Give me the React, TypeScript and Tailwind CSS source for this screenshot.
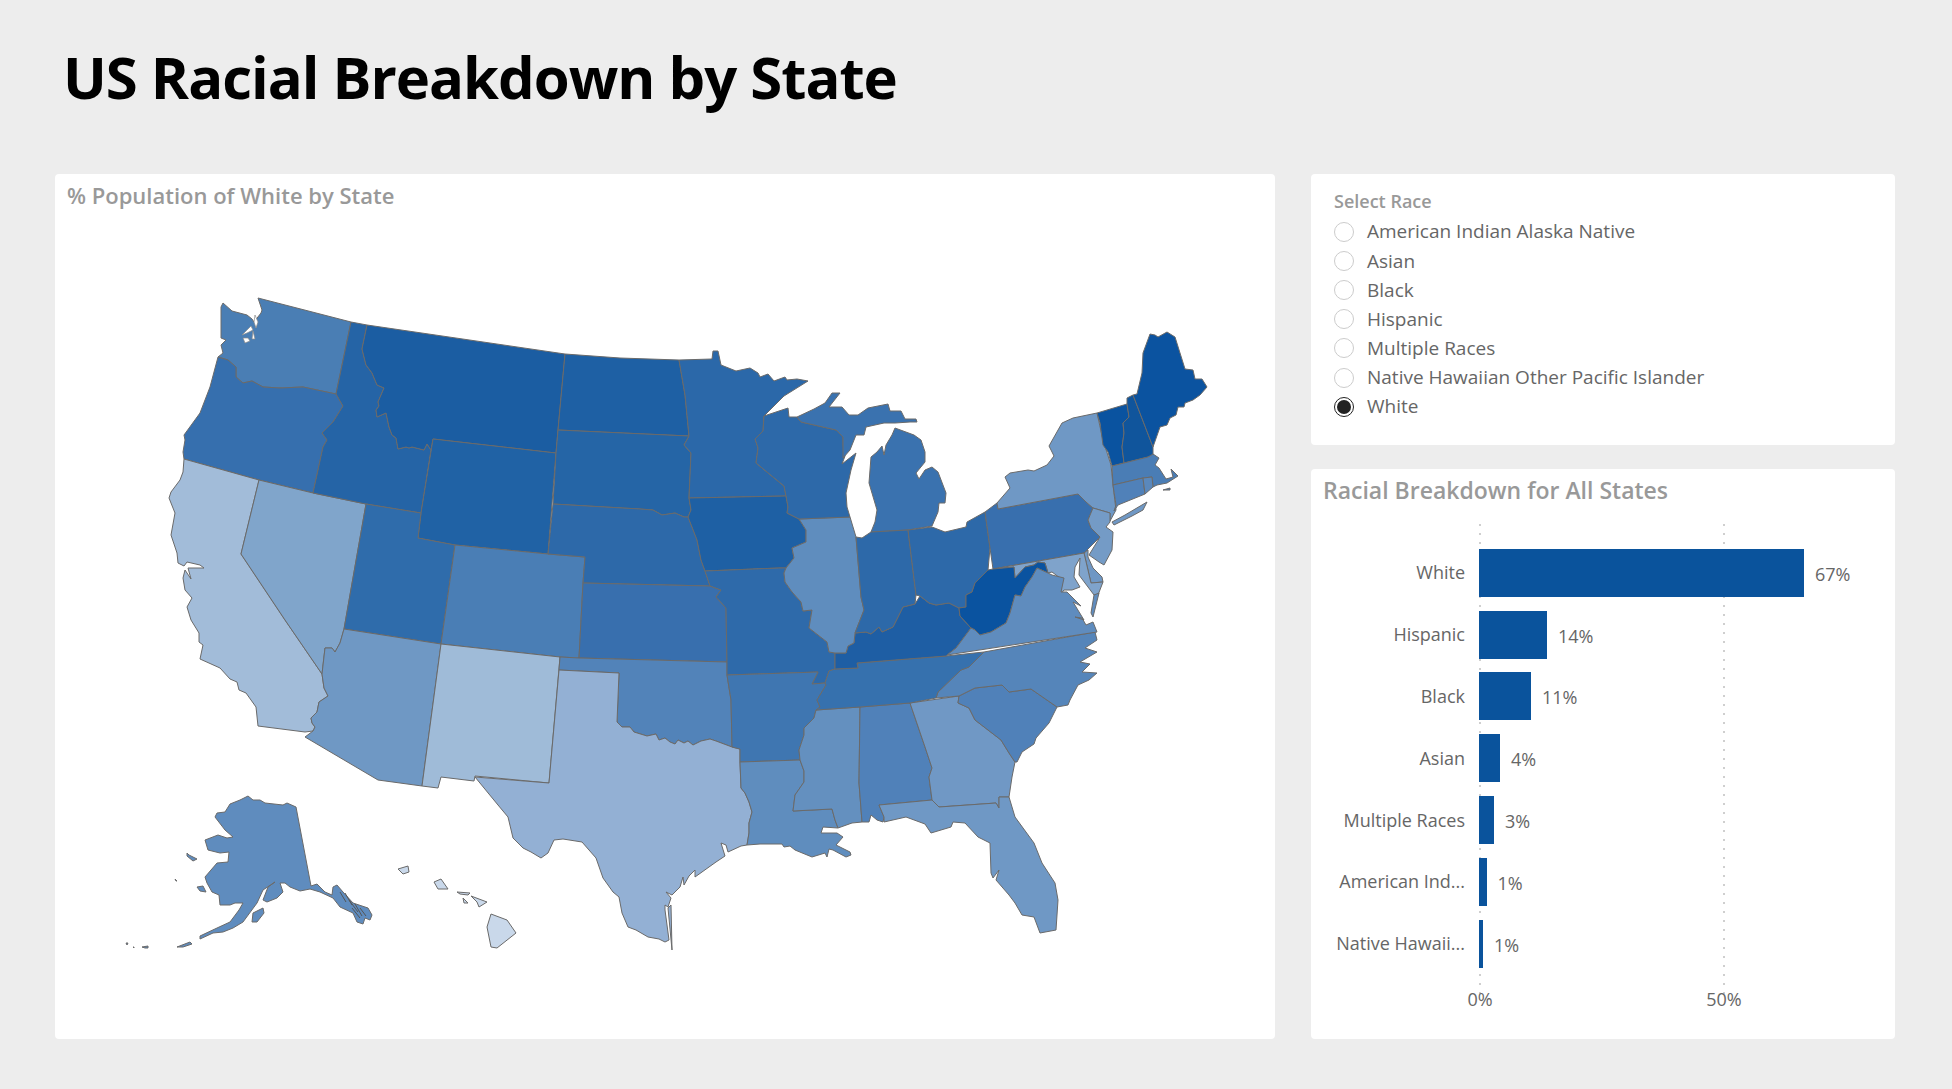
const FONT = "font-['Open_Sans','Noto_Sans',sans-serif]";

// map shapes, coordinates are page pixels
const states: { n: string; f: string; p: string }[] = [
  { n: "WA", f: "#4a7eb4", p: "258,298 351,322 336,394 303,387 280,388 263,387 252,381 243,383 236,377 236,367 228,360 218,357 223,353 221,345 226,340 221,338 221,307 223,303 232,311 247,315 252,319 254,322 261,313 262,310" },
  { n: "OR", f: "#366fae", p: "218,357 228,360 236,367 236,377 243,383 252,381 263,387 280,388 303,387 336,394 343,406 333,422 322,433 327,440 323,447 313,493 259,480 184,459 183,452 185,440 184,435 200,413 210,387" },
  { n: "CA", f: "#a2bcd9", p: "184,459 259,480 241,554 285,620 322,674 324,688 328,696 319,702 317,712 311,718 312,723 315,727 313,731 305,732 258,726 256,707 246,693 239,690 237,682 230,679 220,668 200,659 203,645 199,642 199,633 191,620 187,607 192,598 185,590 183,578 185,570 191,579 188,568 204,568 200,565 187,562 184,566 178,563 177,553 171,535 175,513 169,498 171,492 180,480 183,472" },
  { n: "NV", f: "#80a5cb", p: "259,480 313,493 366,504 344,629 340,643 335,652 332,648 325,648 322,674 285,620 241,554" },
  { n: "ID", f: "#2564a6", p: "351,322 367,325 362,349 366,365 372,373 377,385 384,388 378,402 379,406 376,410 377,417 386,413 389,427 392,435 396,438 398,449 406,447 409,448 412,447 424,450 427,444 431,450 421,513 366,504 313,493 323,447 327,440 322,433 333,422 343,406 336,394" },
  { n: "MT", f: "#1b5da2", p: "367,325 565,354 558,430 556,453 433,439 431,450 427,444 424,450 412,447 409,448 406,447 398,449 396,438 392,435 389,427 386,413 377,417 376,410 379,406 378,402 384,388 377,385 372,373 366,365 362,349" },
  { n: "WY", f: "#2062a5", p: "433,439 556,453 548,554 455,545 418,538 421,513" },
  { n: "UT", f: "#2f6cab", p: "366,504 421,513 418,538 455,545 441,644 344,629" },
  { n: "CO", f: "#4a7eb5", p: "455,545 548,554 585,557 583,583 579,658 560,657 441,644" },
  { n: "AZ", f: "#6f98c4", p: "344,629 441,644 422,786 378,780 305,737 313,731 315,727 312,723 311,718 317,712 319,702 328,696 324,688 322,674 325,648 332,648 335,652 340,643" },
  { n: "NM", f: "#9fbbd8", p: "441,644 560,657 549,783 475,776 474,781 441,777 438,788 422,786" },
  { n: "ND", f: "#1e60a4", p: "565,354 620,358 679,360 685,395 689,436 558,430" },
  { n: "SD", f: "#2565a6", p: "558,430 689,436 684,445 691,453 689,498 691,510 688,517 684,517 675,513 662,515 653,510 640,509 553,504 556,453" },
  { n: "NE", f: "#2d69a9", p: "553,504 640,509 653,510 662,515 675,513 684,517 688,517 692,527 697,540 701,560 705,571 710,586 583,583 585,557 548,554" },
  { n: "KS", f: "#386fae", p: "583,583 710,586 721,590 716,597 726,608 727,662 579,658" },
  { n: "OK", f: "#5283b9", p: "560,657 579,658 727,662 727,675 731,700 732,747 716,741 710,739 701,741 693,745 688,741 684,743 678,740 675,744 670,742 665,738 659,740 656,734 647,736 634,732 630,727 622,727 617,722 619,673 559,670" },
  { n: "TX", f: "#93b0d4", p: "559,670 619,673 617,722 622,727 630,727 634,732 647,736 656,734 659,740 665,738 670,742 675,744 678,740 684,743 688,741 693,745 701,741 710,739 716,741 732,747 740,749 740,762 741,788 745,793 749,802 752,812 749,823 749,833 747,845 741,846 728,852 726,845 721,843 725,856 716,862 695,877 695,870 689,876 684,885 683,877 680,887 672,895 666,892 671,898 668,907 665,905 665,910 669,940 665,942 659,939 648,937 636,930 628,927 622,913 619,897 613,892 603,878 596,858 582,842 563,839 554,840 548,853 541,858 531,852 523,848 513,838 508,817 498,805 475,777 549,783" },
  { n: "TXi", f: "#93b0d4", p: "668,908 671,905 672,950" },
  { n: "MN", f: "#2b68a9", p: "679,360 712,359 713,351 718,351 721,365 736,371 750,368 758,373 760,377 768,374 774,381 785,377 787,380 797,379 808,381 784,396 764,416 763,431 755,439 758,448 756,463 773,477 784,486 786,496 689,498 691,453 684,445 689,436 685,395" },
  { n: "IA", f: "#1e60a4", p: "689,498 786,496 788,507 787,513 799,519 806,530 806,542 792,548 794,558 786,568 779,568 705,571 701,560 697,540 692,527 688,517 691,510" },
  { n: "MO", f: "#2e6aaa", p: "705,571 779,568 786,568 784,573 785,582 792,592 801,602 803,611 812,610 809,628 827,642 829,652 835,653 835,669 829,671 825,683 812,684 818,672 727,675 727,662 726,608 716,597 721,590 710,586" },
  { n: "AR", f: "#3f76b1", p: "727,675 818,672 812,684 825,683 826,685 820,695 817,700 820,707 816,710 814,718 804,728 804,735 799,750 800,760 740,762 740,749 732,747 731,700" },
  { n: "LA", f: "#5f8dbe", p: "740,762 800,760 804,771 804,782 795,795 793,811 832,809 835,820 838,828 823,827 821,833 837,833 843,837 836,845 850,852 851,855 846,857 833,850 829,849 827,857 825,853 812,857 795,850 790,846 784,847 782,844 760,844 747,845 749,833 749,823 752,812 749,802 745,793 741,788" },
  { n: "MS", f: "#6490bf", p: "816,710 860,707 859,783 862,822 852,823 838,828 835,820 832,809 793,811 795,795 804,782 804,771 800,760 799,750 804,735 804,728 814,718" },
  { n: "AL", f: "#5081b9", p: "860,707 910,703 925,747 932,768 929,777 932,800 879,805 884,817 883,822 877,820 871,815 869,822 862,822 859,783" },
  { n: "GA", f: "#7098c5", p: "910,703 959,696 958,703 969,708 975,720 1001,740 1009,753 1015,762 1012,777 1009,797 999,797 999,808 996,803 939,807 932,800 929,777 932,768 925,747" },
  { n: "FL", f: "#6f98c5", p: "879,805 932,800 939,807 996,803 999,808 999,797 1009,797 1015,817 1034,843 1042,863 1055,883 1058,900 1056,930 1040,933 1034,917 1022,915 1015,903 1009,895 996,880 999,870 993,878 991,873 990,843 978,837 965,823 953,822 951,827 931,833 925,824 906,817 884,822 884,817" },
  { n: "SC", f: "#5081b9", p: "959,696 975,688 1002,685 1009,692 1031,689 1057,707 1049,723 1036,738 1034,744 1022,752 1017,762 1015,762 1009,753 1001,740 975,720 969,708 958,703" },
  { n: "NC", f: "#5585ba", p: "984,652 1095,632 1097,640 1085,648 1097,652 1080,662 1090,664 1082,672 1097,673 1089,680 1078,685 1070,700 1068,705 1057,707 1031,689 1009,692 1002,685 975,688 959,696 936,698 938,692 961,670 969,667" },
  { n: "TN", f: "#3671ae", p: "835,669 858,668 857,663 946,656 984,652 969,667 961,670 938,692 936,698 910,703 860,707 816,710 820,707 817,700 820,695 826,685 825,683 829,671" },
  { n: "KY", f: "#1e5ea4", p: "835,653 846,653 848,646 854,643 855,633 866,632 871,634 879,627 882,632 893,627 899,615 903,607 915,604 920,596 929,603 936,605 949,603 959,608 960,616 971,628 956,648 946,656 857,663 858,668 835,669" },
  { n: "IL", f: "#5f8dbe", p: "799,519 850,517 856,537 861,597 864,610 855,633 854,643 848,646 846,653 835,653 829,652 827,642 809,628 812,610 803,611 801,602 792,592 785,582 784,573 786,568 794,558 792,548 806,542 806,530" },
  { n: "WI", f: "#2d69a9", p: "764,416 788,408 789,417 797,417 801,422 836,430 843,437 843,445 845,456 842,464 856,453 851,470 846,493 847,507 850,517 799,519 787,513 788,507 786,496 784,486 773,477 756,463 758,448 755,439 763,431" },
  { n: "MIu", f: "#3a72af", p: "797,417 814,409 825,403 832,393 840,393 829,407 842,407 849,415 858,415 868,408 888,404 890,411 901,411 905,419 916,419 917,422 910,422 895,423 884,423 866,427 864,435 856,435 850,450 843,458 843,445 843,437 836,430 801,422" },
  { n: "MI", f: "#3a72af", p: "892,435 895,428 914,435 921,440 925,452 925,462 916,473 919,479 925,470 932,467 938,472 946,493 945,503 939,503 938,512 932,526 908,530 871,532 875,522 877,510 869,483 871,457 877,452 882,446 884,455 886,445" },
  { n: "IN", f: "#2d69a9", p: "856,537 862,538 871,532 908,530 916,595 915,604 903,607 899,615 893,627 882,632 879,627 871,634 866,632 855,633 864,610 861,597" },
  { n: "OH", f: "#2d69a9", p: "908,530 932,527 945,532 966,527 967,522 985,512 990,548 988,570 975,583 972,592 966,595 966,607 959,608 949,603 936,605 929,603 920,596 916,595" },
  { n: "PA", f: "#386fae", p: "985,512 997,503 998,509 1078,494 1086,502 1093,508 1088,520 1091,528 1100,537 1084,553 993,569 990,548" },
  { n: "NY", f: "#6f98c5", p: "998,509 997,503 1010,488 1005,477 1010,473 1028,470 1034,471 1047,465 1054,456 1049,446 1062,423 1073,418 1097,413 1103,440 1111,465 1113,485 1116,510 1110,521 1110,513 1093,508 1086,502 1078,494" },
  { n: "LI", f: "#6f98c5", p: "1112,522 1125,515 1147,502 1143,510 1132,516 1114,525" },
  { n: "NJ", f: "#749bc6", p: "1093,508 1110,513 1110,522 1106,527 1113,532 1112,550 1104,565 1099,562 1089,555 1100,537 1091,528 1088,520" },
  { n: "DE", f: "#6f97c4", p: "1088,550 1088,557 1093,568 1102,577 1103,582 1091,583 1084,553" },
  { n: "MD", f: "#7fa3cb", p: "993,569 1084,553 1091,583 1103,582 1098,595 1094,595 1085,583 1079,575 1080,558 1075,567 1074,577 1080,587 1072,590 1064,590 1060,595 1062,583 1060,578 1052,572 1048,573 1045,563 1038,562 1034,565 1025,567 1015,578 1014,567" },
  { n: "WV", f: "#0a53a0", p: "993,569 1014,567 1015,578 1025,567 1034,565 1038,562 1045,563 1048,573 1037,568 1032,577 1025,587 1021,596 1015,595 1010,613 1006,623 991,632 980,635 975,630 971,628 960,616 959,608 966,607 966,595 972,592 975,583 988,570" },
  { n: "VA", f: "#5f8cbe", p: "947,655 1097,632 1093,622 1086,625 1082,618 1075,617 1084,620 1073,602 1081,606 1067,592 1061,592 1064,578 1052,575 1048,573 1037,568 1032,577 1025,587 1021,596 1015,595 1010,613 1006,623 991,632 980,635 975,630 971,628 956,648" },
  { n: "VAe", f: "#5f8cbe", p: "1099,593 1094,595 1091,613 1093,617" },
  { n: "VT", f: "#0a53a0", p: "1097,413 1127,404 1129,417 1123,423 1124,433 1122,447 1124,463 1112,466 1108,452 1103,445 1100,423" },
  { n: "NH", f: "#10559c", p: "1127,398 1133,395 1153,447 1153,455 1148,457 1124,463 1122,447 1124,433 1123,423 1129,417 1127,404" },
  { n: "ME", f: "#0b53a0", p: "1133,395 1137,394 1142,373 1143,353 1150,334 1155,335 1158,337 1167,332 1175,337 1185,369 1193,370 1195,379 1202,379 1207,387 1200,395 1193,400 1185,403 1184,407 1178,407 1176,415 1170,418 1167,425 1160,427 1153,447" },
  { n: "MA", f: "#4a7db5", p: "1112,466 1124,463 1148,457 1153,454 1159,458 1155,465 1159,468 1166,479 1173,477 1171,469 1178,476 1167,483 1157,485 1153,487 1152,477 1143,478 1113,485" },
  { n: "CT", f: "#5081b9", p: "1113,485 1143,478 1145,494 1118,505 1114,511 1116,505" },
  { n: "RI", f: "#5a88bc", p: "1143,478 1152,477 1153,487 1145,494" },
  { n: "MAi", f: "#4a7db5", p: "1163,490 1170,488 1170,490" },
  { n: "AK", f: "#5f8cbe", p: "248,796 253,800 260,800 265,803 283,805 287,803 296,807 311,886 317,884 325,892 332,895 333,887 337,885 343,892 353,903 368,908 372,915 370,920 365,918 363,924 357,922 353,913 340,907 333,898 320,892 310,889 300,891 290,887 285,883 280,883 283,892 277,898 267,902 263,900 268,887 275,882 263,890 257,903 243,922 233,928 223,932 213,933 200,939 200,936 217,928 230,922 239,910 243,903 235,903 230,905 220,905 219,895 212,892 207,883 205,877 217,863 228,862 229,852 220,853 208,850 205,840 218,835 227,838 233,837 225,830 215,817 217,813 225,812 230,804 240,800" },
  { n: "AKk", f: "#5f8cbe", p: "252,922 253,913 263,908 264,913 257,922" },
  { n: "AKn", f: "#5f8cbe", p: "197,887 203,886 206,892 200,891" },
  { n: "AKs", f: "#5f8cbe", p: "187,853 189,855 197,859 193,861 187,856" },
  { n: "AKa", f: "#5f8cbe", p: "177,947 190,942 192,944 183,947" },
  { n: "AKb", f: "#5f8cbe", p: "142,947 148,946 148,948 145,948" },
  { n: "AKc", f: "#5f8cbe", p: "126,943 128,943 127,945" },
  { n: "AKd", f: "#5f8cbe", p: "133,947 134,947 134,948" },
  { n: "AKe", f: "#5f8cbe", p: "175,879 177,881 176,881" },
  { n: "HIa", f: "#c9d8ea", p: "398,869 408,866 409,872 403,874" },
  { n: "HIb", f: "#c9d8ea", p: "434,882 441,879 448,889 438,889" },
  { n: "HIc", f: "#c9d8ea", p: "457,892 470,893 468,895 460,894" },
  { n: "HId", f: "#c9d8ea", p: "463,898 468,903 464,903" },
  { n: "HIe", f: "#c9d8ea", p: "471,896 487,902 479,907 477,902" },
  { n: "HIf", f: "#c9d8ea", p: "491,914 507,920 516,933 497,948 491,947 487,927" },
];

// water cut out of the states
const cutouts = [
  "242,335 251,326 253,330 247,333",
  "255,315 258,322 256,328 254,322",
  "243,338 248,338 250,341 245,343",
  "253,331 255,339 252,339",
];

const panhandle = "340,892 346,902 M345,893 352,905 M349,900 358,912 M355,904 362,916 M360,908 366,916 M352,908 360,918";

const races = [
  "American Indian Alaska Native",
  "Asian",
  "Black",
  "Hispanic",
  "Multiple Races",
  "Native Hawaiian Other Pacific Islander",
  "White",
];

const bars = [
  { label: "White", value: 67, width: 325 },
  { label: "Hispanic", value: 14, width: 68 },
  { label: "Black", value: 11, width: 52 },
  { label: "Asian", value: 4, width: 21 },
  { label: "Multiple Races", value: 3, width: 15 },
  { label: "American Ind...", value: 1, width: 7.5 },
  { label: "Native Hawaii...", value: 1, width: 4 },
];

const UsMap = () => (
  <svg viewBox="55 216 1220 823" className="block h-[823px] w-[1220px]">
    {states.map((s) => (
      <polygon key={s.n} points={s.p} fill={s.f} stroke="#6a6a6a" strokeWidth={1} strokeLinejoin="round" />
    ))}
    {cutouts.map((c) => (
      <polygon key={c} points={c} fill="#ffffff" stroke="#8a8a8a" strokeWidth={0.7} />
    ))}
    <path d={"M" + panhandle} fill="none" stroke="#555555" strokeWidth={1} />
  </svg>
);

const Radio = ({ label }: { label: string }) => {
  const selected = label === "White";
  return (
    <div className="flex h-[29.2px] items-center">
      {selected ? (
        <span className="flex h-5 w-5 items-center justify-center rounded-full border-[1.5px] border-[#222]">
          <span className="h-[14px] w-[14px] rounded-full bg-[#222]" />
        </span>
      ) : (
        <span className="h-5 w-5 rounded-full border-[1.5px] border-[#ccc]" />
      )}
      <span className="ml-[13px] text-[19px] text-[#666]">{label}</span>
    </div>
  );
};

const App = () => {
  return (
    <div className={`${FONT} h-[1089px] w-[1952px] bg-[#ededed]`}>
      <div className="h-[174px] pl-[63px] pt-[38px]">
        <h1 className="text-[58px] font-bold leading-[78px] tracking-[-1px] text-black">
          US Racial Breakdown by State
        </h1>
      </div>
      <div className="flex gap-[36px] pl-[55px]">
        <div className="h-[865px] w-[1220px] rounded-[4px] bg-white">
          <div className="h-[42px] pl-[12px] pt-[6px] text-[22px] font-semibold leading-[30px] text-[#999]">
            % Population of White by State
          </div>
          <UsMap />
        </div>
        <div className="flex w-[584px] flex-col gap-[24px]">
          <div className="h-[271px] rounded-[4px] bg-white pl-[23px] pt-[13px]">
            <div className="h-[30px] text-[18px] font-semibold leading-[28px] text-[#999]">Select Race</div>
            {races.map((r) => (
              <Radio key={r} label={r} />
            ))}
          </div>
          <div className="relative h-[570px] rounded-[4px] bg-white">
            <div className="pl-[12px] pt-[4px] text-[23px] font-semibold leading-[34px] text-[#999]">
              Racial Breakdown for All States
            </div>
            <div className="absolute left-[168px] top-[55px] h-[470px] w-[2px] bg-[repeating-linear-gradient(to_bottom,#cfcfcf_0,#cfcfcf_2px,transparent_2px,transparent_9px)]" />
            <div className="absolute left-[412px] top-[55px] h-[470px] w-[2px] bg-[repeating-linear-gradient(to_bottom,#cfcfcf_0,#cfcfcf_2px,transparent_2px,transparent_9px)]" />
            <div className="relative mt-[35px]">
              {bars.map((b) => (
                <div key={b.label} className="flex h-[61.8px] items-center">
                  <div className="w-[154px] text-right text-[18px] text-[#666]">{b.label}</div>
                  <div className="ml-[14px] h-[48px] bg-[#0a539c]" style={{ width: b.width }} />
                  <div className="ml-[11px] pt-[3px] text-[18px] text-[#666]">{b.value}%</div>
                </div>
              ))}
            </div>
            <div className="relative mt-[12px] h-[24px] text-[18px] leading-[24px] text-[#666]">
              <span className="absolute left-[169px] -translate-x-1/2">0%</span>
              <span className="absolute left-[413px] -translate-x-1/2">50%</span>
            </div>
          </div>
        </div>
      </div>
    </div>
  );
};

export default App;
